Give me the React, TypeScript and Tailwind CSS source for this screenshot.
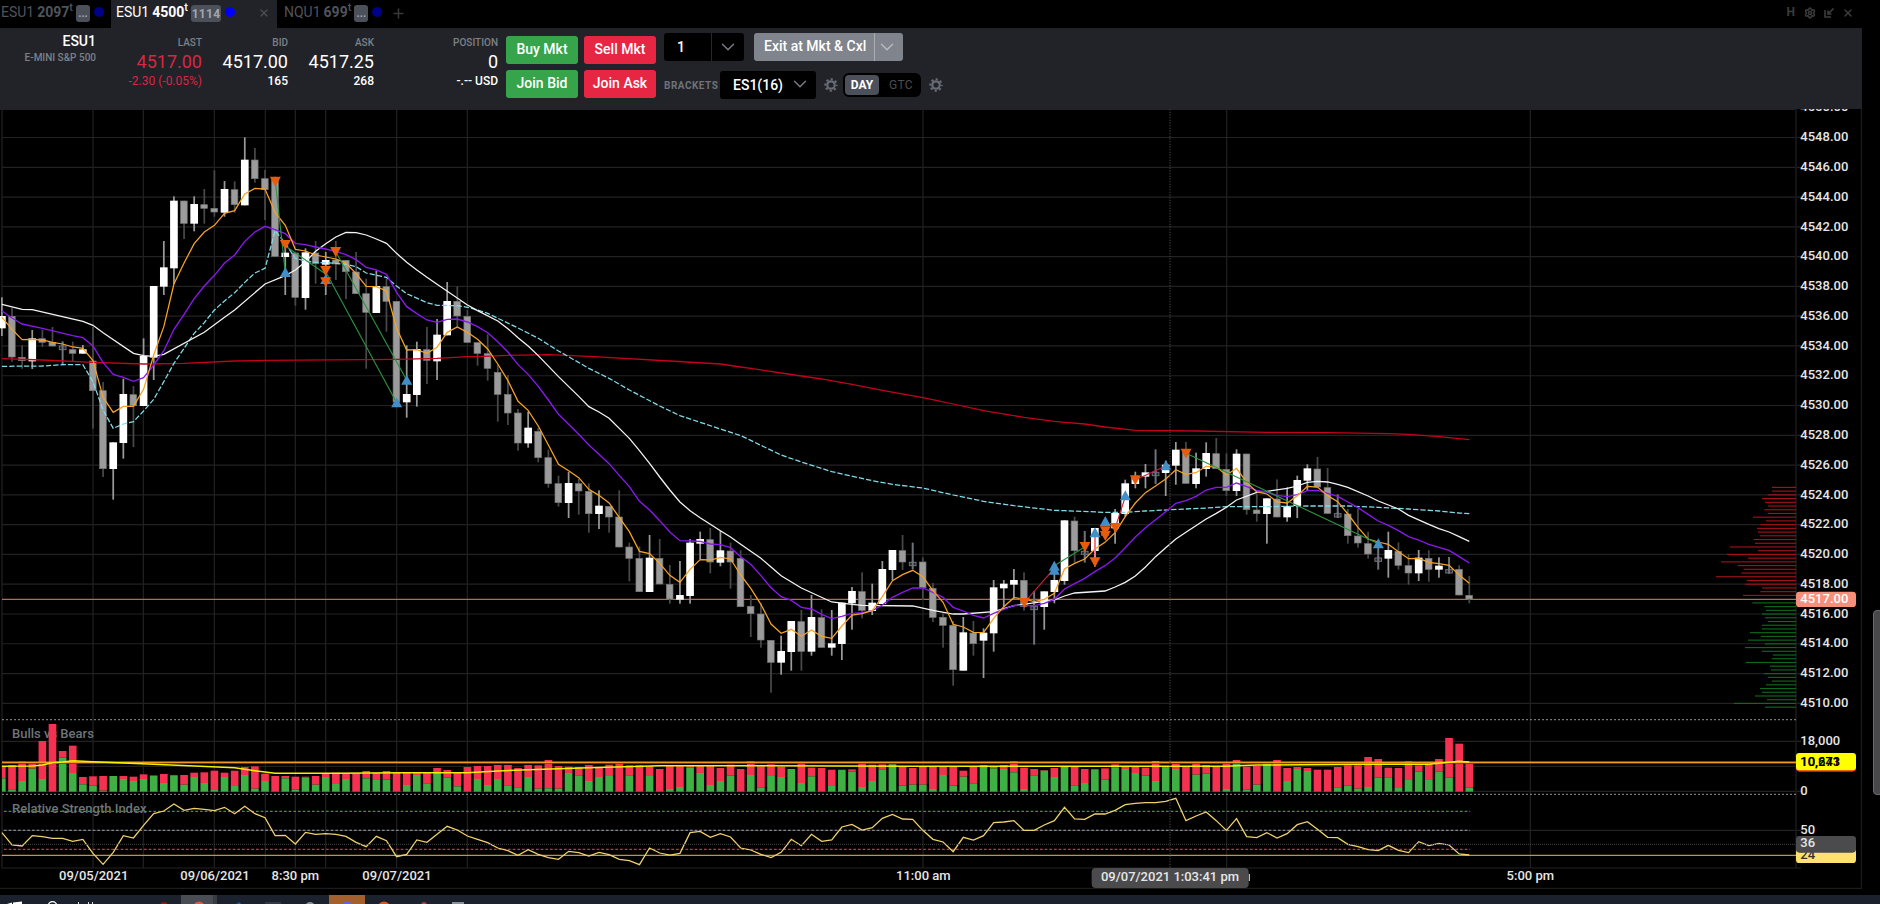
import { ChevronDown, Plus, Settings, X } from "lucide-react";

// All chart coordinates are in thirds of a pixel.
const X0 = 5.7;
const STEP = 30.36;
const AXIS_X = 5389;

const xAt = (i: number) => X0 + STEP * i;

type Segment = { start: number; base: number; rows: number[][] };

// rows: [high, top, bottom, low, kind]  kind: 1 up, 0 down, 2 neutral
const candleSegments: Segment[] = [
  {
    start: 0,
    base: 330,
    rows: [
      [562, 618, 655, 678, 1], [594, 618, 742, 755, 0], [706, 741, 753, 776, 0], [660, 685, 754, 777, 1],
      [660, 685, 698, 711, 0], [651, 696, 709, 709, 0], [694, 707, 718, 766, 2], [695, 718, 731, 754, 0],
      [705, 718, 731, 731, 1], [651, 752, 843, 956, 0], [816, 841, 1077, 1101, 0], [997, 997, 1077, 1169, 1],
      [806, 852, 999, 1046, 1], [828, 853, 888, 1011, 0], [685, 738, 888, 888, 1], [528, 528, 743, 810, 1],
      [393, 472, 530, 555, 1], [259, 272, 475, 522, 1], [272, 272, 341, 387, 0], [259, 282, 341, 364, 1],
      [237, 283, 296, 341, 0], [181, 294, 307, 320, 0], [213, 237, 308, 320, 1], [214, 238, 285, 308, 0],
      [82, 149, 286, 286, 1], [114, 149, 207, 218, 0], [180, 205, 240, 330, 0], [200, 205, 440, 441, 0],
      [400, 428, 441, 555, 1], [428, 428, 563, 587, 0], [415, 427, 564, 599, 1], [393, 428, 462, 521, 0],
      [426, 450, 464, 555, 1], [393, 449, 463, 510, 0], [450, 450, 486, 567, 0], [426, 485, 552, 552, 0],
      [506, 550, 608, 776, 0], [483, 528, 609, 609, 1], [505, 529, 575, 665, 0], [573, 573, 877, 890, 0],
      [706, 852, 877, 923, 1], [695, 717, 855, 890, 1], [651, 718, 752, 822, 0], [627, 674, 754, 810, 1],
      [516, 573, 676, 676, 1], [529, 573, 619, 655, 0], [600, 618, 698, 698, 0],
    ],
  },
  {
    start: 47,
    base: 690,
    rows: [
      [337, 337, 371, 407, 0], [313, 370, 416, 452, 0], [405, 426, 494, 575, 0], [435, 492, 550, 585, 0],
      [537, 548, 640, 662, 0], [545, 593, 640, 653, 1], [594, 603, 684, 697, 0], [659, 682, 762, 773, 0],
      [737, 760, 819, 830, 0], [726, 759, 819, 864, 1], [747, 760, 784, 854, 0], [760, 783, 852, 908, 0],
      [781, 827, 852, 897, 1], [828, 828, 862, 908, 0], [781, 860, 952, 952, 0], [938, 950, 986, 1054, 0],
      [949, 984, 1086, 1086, 0], [915, 983, 1086, 1086, 1], [927, 984, 1063, 1063, 0], [1005, 1062, 1108, 1121, 0],
      [993, 1095, 1109, 1121, 1], [927, 938, 1098, 1121, 1], [905, 927, 941, 987, 1], [894, 928, 997, 1030, 0],
      [903, 961, 998, 1009, 1], [938, 962, 997, 1076, 0], [961, 984, 1131, 1131, 0],
    ],
  },
  {
    start: 74,
    base: 1020,
    rows: [
      [765, 798, 822, 891, 0], [790, 821, 901, 923, 0], [900, 900, 968, 1058, 0], [887, 933, 968, 1004, 1],
      [843, 843, 936, 992, 1], [810, 844, 935, 992, 0], [765, 831, 935, 947, 1], [808, 832, 923, 923, 0],
      [810, 910, 923, 947, 1], [788, 788, 912, 960, 1], [741, 753, 790, 869, 1], [697, 754, 812, 835, 0],
      [731, 788, 813, 825, 1], [663, 687, 792, 792, 1], [630, 630, 690, 720, 1], [585, 631, 667, 690, 0],
      [608, 666, 676, 688, 2], [652, 665, 744, 780, 0], [729, 744, 833, 846, 0], [820, 831, 857, 923, 0],
      [843, 855, 990, 1037, 0], [831, 877, 992, 992, 1], [843, 878, 912, 947, 0], [865, 878, 902, 1014, 1],
      [720, 742, 880, 935, 1], [720, 731, 745, 802, 1], [687, 720, 734, 775, 1], [697, 720, 800, 812, 0],
      [753, 798, 808, 914, 2], [754, 754, 801, 869, 1], [700, 720, 756, 790, 1],
    ],
  },
  {
    start: 105,
    base: 1260,
    rows: [
      [301, 301, 483, 494, 1], [290, 302, 393, 428, 0], [333, 393, 402, 428, 2], [324, 324, 393, 440, 1],
      [330, 335, 345, 355, 2], [267, 279, 325, 371, 1], [179, 190, 282, 290, 1], [155, 170, 192, 205, 1],
      [132, 157, 170, 205, 1], [88, 156, 166, 192, 2], [122, 134, 159, 228, 1], [66, 89, 137, 194, 1],
      [66, 90, 191, 191, 0], [98, 145, 192, 205, 1], [67, 99, 147, 170, 1], [54, 100, 147, 147, 0],
      [100, 147, 213, 228, 0], [88, 101, 213, 228, 1], [101, 101, 270, 284, 0], [220, 269, 282, 305, 0],
      [235, 235, 282, 371, 1], [178, 236, 292, 292, 0], [202, 258, 292, 305, 1], [167, 180, 258, 294, 1],
      [133, 145, 182, 213, 1], [111, 146, 202, 202, 0], [144, 202, 281, 281, 0], [223, 280, 290, 294, 2],
      [267, 281, 348, 371, 0], [267, 347, 370, 383, 0], [335, 370, 403, 416, 0], [360, 413, 423, 449, 2],
      [335, 390, 416, 473, 1], [367, 393, 437, 449, 0], [402, 436, 460, 494, 0], [390, 413, 460, 483, 1],
      [391, 414, 449, 485, 0], [412, 437, 449, 473, 1], [411, 448, 458, 461, 2], [436, 447, 526, 526, 0],
      [468, 525, 538, 550, 0],
    ],
  },
];

// Each part is [base, "index:value ..."]
type Curve = [number, string][];

const fastMa: Curve = [
  [330, "0:622 1:658 2:689 3:688 4:690 5:697 6:702 7:711 8:715 9:752 10:862 11:907 12:889 13:889 14:838 15:735 16:650 17:522 18:459 19:401 20:366 21:346 22:310 23:302 24:252 25:235 26:237 27:308 28:346 29:418 30:423 31:435 32:441 33:447 34:459 35:491 36:529 37:530 38:543 39:655 40:720 41:719 42:730 43:712 44:667 45:651 46:667"],
  [690, "47:328 48:357 49:402 50:452 51:514 52:541 53:588 54:645 55:703 56:722 57:743 58:778 59:796 60:819 61:862 62:905 63:964 64:971 65:1000 66:1036 67:1057 68:1018 69:989 70:990 71:982 72:987 73:1035"],
  [1020, "74:745 75:793 76:852 77:880 78:868 79:889 80:870 81:889 82:895 83:858 84:825 85:821 86:812 87:770 88:722 89:704 90:691 91:710 92:752 93:787 94:853 95:861 96:877 97:878 98:835 99:800 100:773 101:777 102:785 103:778 104:760"],
  [1260, "105:447 106:430 107:417 108:387 109:367 110:338 111:290 112:249 113:218 114:198 115:177 116:149 117:163 118:158 119:139 120:141 121:165 122:145 123:187 124:216 125:222 126:246 127:249 128:227 129:199 130:201 131:227 132:245 133:282 134:322 135:357 136:366 137:373 138:395 139:416 140:415 141:427 142:431 143:436 144:465 145:490"],
];

const midMa: Curve = [
  [330, "0:603 1:624 2:642 4:655 7:677 8:683 9:708 10:758 11:793 12:802 13:814 14:803 15:765 16:722 17:658 18:613 19:566 20:528 21:496 22:459 23:435 24:394 25:366 26:349 27:359 28:371 29:400 30:404 31:411 32:417 33:424 34:434 35:449 36:472 37:480 38:493 39:547 40:590 41:611 42:630 43:637 44:628 45:627 46:636"],
  [690, "47:290 48:308 49:335 50:366 51:404 52:433 53:469 54:510 55:553 56:583 57:613 58:645 59:673 60:701 61:736 62:770 63:814 64:840 65:872 66:906 67:932 68:933 69:934 70:942 71:944 72:953 73:980"],
  [1020, "74:673 75:707 76:743 77:770 78:781 79:802 80:807 81:823 82:836 83:829 84:820 85:818 86:812 87:795 88:772 89:757 90:744 91:744 92:757 93:772 94:802 95:813 96:826 97:834 98:820 99:808 100:796 101:797 102:797 103:790 104:778"],
  [1260, "105:507 106:491 107:475 108:455 109:437 110:414 111:383 112:351 113:323 114:299 115:275 116:250 117:242 118:229 119:210 120:202 121:202 122:189 123:200 124:211 125:216 126:226 127:230 128:224 129:212 130:211 131:220 132:229 133:246 134:263 135:283 136:303 137:316 138:332 139:350 140:360 141:373 142:382 143:391 144:410 145:429"],
];

const slowMa: Curve = [
  [330, "0:583 2:598 3:599 8:634 9:646 10:668 13:730 14:737 15:739 16:733 20:667 22:622 23:600 26:522 28:497 29:480 30:455 31:424 32:401 33:381 34:367 35:368 36:375 37:387 38:400 39:430 40:457 41:480 42:502 43:523 46:585"],
  [690, "47:242 49:273 50:296 51:323 52:348 53:377 55:440 57:499 58:530 59:546 60:565 62:625 63:662 64:700 65:741 66:780 67:816 68:842 69:863 71:902 72:921 73:943"],
  [1020, "74:634 75:655 76:681 77:707 79:744 82:786 84:793 85:796 90:798 92:811 94:822 95:822 98:815 100:797 103:784 104:780"],
  [1260, "105:528 106:519 109:513 110:501 111:487 112:468 113:441 114:410 115:383 116:357 117:337 119:297 120:280 121:262 122:240 124:217 125:214 127:205 128:198 129:187 130:184 131:186 132:193 133:202 135:228 136:243 138:267 139:286 141:313 142:326 143:336 144:350 145:364"],
];

const vwap: Curve = [
  [330, "0:769 4:768 6:764 8:764 9:815 10:900 11:955 12:942 13:935 14:903 15:868 16:815 17:760 18:715 19:670 20:638 21:600 22:573 23:548 24:517 25:489 26:475 27:362 28:400 29:445 30:453 31:457 33:460 34:463 35:470 36:489 38:502 39:528 40:551 42:578 43:586 45:587 46:592"],
  [690, "47:240 48:250 51:294 53:325 55:363 58:415 60:445 62:480 65:528 67:557 69:577 73:617"],
  [1020, "74:301 75:316 77:345 79:366 82:395 86:422 88:433 91:444 94:465 97:484 100:497 104:511"],
  [1260, "105:272 109:277 111:277 113:273 119:264 121:260 125:260 129:258 133:258 136:262 139:267 142:273 144:279 145:281"],
];

const longMa: Curve = [
  [330, "0:746 4:750 9:757 14:762 18:760 23:753 26:751 39:748 43:745 46:740"],
  [690, "47:380 50:376 54:374 58:379 66:393 71:402 73:411"],
  [1020, "74:85 77:99 81:117 84:133 87:151 91:173 94:192 97:212 101:232 104:244"],
  [1260, "105:7 107:12 109:21 112:31 118:33 125:37 131:38 137:41 139:43 142:50 145:59"],
];

const rsi: Curve = [
  [2100, "0:398 1:435 2:438 3:407 4:410 5:415 6:415 7:424 8:418 9:460 10:493 11:457 12:407 13:414 14:376 15:341 16:333 17:312 18:331 19:325 20:328 21:332 22:322 23:341 24:319 25:341 26:353 27:407 28:406 29:432 30:397 31:403 32:401 33:403 34:409 35:427 36:440 37:409 38:422 39:470 40:463 41:420 42:427 43:403 44:379 45:390 46:408 47:418 48:428 49:444 50:452 51:466 52:449 53:463 54:473 55:478 56:454 57:458 58:468 59:457 60:464 61:478 62:482 63:494 64:444 65:459 66:465 67:460 68:398 69:394 70:412 71:401 72:411 73:444 74:450 75:463 76:473 77:457 78:418 79:437 80:403 81:424 82:420 83:381 84:373 85:390 86:383 87:355 88:343 89:357 90:358 91:391 92:418 93:426 94:455 95:412 96:420 97:407 98:368 99:366 100:362 101:391 102:391 103:375 104:362 105:322 106:357 107:358 108:342 109:342 110:331 111:314 112:310 113:308 114:308 115:304 116:295 117:362 118:348 119:336 120:362 121:391 122:356 123:410 124:413 125:398 126:414 127:401 128:374 129:365 130:388 131:412 132:413 133:433 134:440 135:449 136:452 137:436 138:451 139:458 140:425 141:437 142:430 143:435 144:462 145:465"],
];

const volumeMa: Curve = [
  [2100, "0:199 3:198 4:195 5:188 6:186 7:182 9:185 15:193 23:203 25:212 27:220 33:220 40:218 46:218 49:213 52:209 58:203 65:197 75:197 90:199 121:199 122:197 124:195 135:193 141:193 143:187 144:184 145:186"],
];

// [bar top, bull top]
const volume: number[][] = [
  [198, 235], [195, 268], [185, 243], [186, 206], [123, 237], [72, 275], [153, 173], [137, 219], [231, 253], [229, 257],
  [228, 272], [228, 228], [228, 237], [230, 243], [223, 237], [226, 227], [222, 249], [225, 226], [225, 254], [218, 231],
  [217, 249], [212, 270], [218, 231], [212, 258], [201, 225], [199, 266], [221, 243], [228, 275], [228, 235], [230, 269],
  [230, 232], [228, 254], [220, 231], [218, 252], [220, 237], [220, 275], [213, 235], [218, 240], [213, 239], [218, 275],
  [217, 255], [217, 225], [218, 250], [204, 219], [210, 233], [218, 259], [201, 275], [198, 237], [198, 255], [195, 237],
  [195, 256], [204, 262], [195, 231], [196, 266], [180, 265], [198, 266], [200, 219], [201, 226], [195, 243], [202, 231],
  [194, 228], [188, 275], [196, 226], [196, 275], [198, 228], [207, 275], [198, 267], [198, 261], [198, 203], [198, 219],
  [197, 255], [204, 243], [194, 227], [207, 275], [184, 225], [198, 262], [193, 228], [200, 231], [207, 207], [188, 249],
  [203, 229], [204, 275], [209, 258], [209, 210], [208, 215], [187, 261], [194, 243], [193, 208], [192, 193], [200, 257],
  [204, 254], [200, 254], [200, 267], [200, 225], [201, 257], [212, 230], [201, 250], [195, 200], [198, 205], [195, 207],
  [184, 217], [203, 267], [207, 226], [210, 212], [204, 231], [198, 199], [198, 256], [207, 249], [207, 208], [205, 239],
  [193, 203], [198, 207], [201, 219], [203, 227], [183, 243], [200, 204], [192, 207], [200, 275], [186, 224], [195, 221],
  [200, 275], [186, 267], [180, 190], [200, 269], [198, 254], [190, 191], [180, 275], [204, 243], [201, 207], [204, 213],
  [209, 275], [209, 275], [201, 262], [196, 257], [196, 266], [171, 261], [177, 233], [203, 232], [204, 264], [184, 240],
  [196, 215], [186, 240], [177, 215], [114, 233], [131, 275], [190, 263],
];

const askProfile = [72, 72, 85, 102, 93, 84, 95, 84, 129, 90, 107, 117, 114, 108, 127, 123, 198, 114, 207, 144, 225, 175, 157, 164, 240, 148, 152, 102, 107, 159];
const bidProfile = [131, 95, 90, 102, 93, 84, 102, 102, 138, 105, 144, 93, 153, 102, 69, 72, 150, 78, 75, 96, 84, 72, 90, 108, 102, 123, 87, 186, 93];

const priceLabels = Array.from({ length: 21 }, (_, i) => 4550 - i * 2);
const priceY = (price: number) => 412.5 + (4548 - price) * 44.67;

const verticals = [6, 279, 430, 643, 796, 886, 977, 1190, 1402, 2769, 3680, 4591];

const timeLabels = [
  { x: 281, text: "09/05/2021" },
  { x: 645, text: "09/06/2021" },
  { x: 886, text: "8:30 pm" },
  { x: 1191, text: "09/07/2021" },
  { x: 2770, text: "11:00 am" },
  { x: 4591, text: "5:00 pm" },
];

const sells = [[826, 544], [856, 734], [977, 812], [1007, 755], [977, 846], [3073, 1808], [3255, 1640], [3285, 1686], [3316, 1593], [3316, 1607], [3346, 1583], [3406, 1440], [3558, 1360]];
const buys = [[856, 817], [977, 838], [1190, 1208], [1220, 1140], [3163, 1698], [3163, 1710], [3285, 1598], [3316, 1564], [3376, 1487], [3498, 1397], [4135, 1631]];

const trades = [
  { from: [826, 544], to: [856, 817], win: true },
  { from: [856, 738], to: [977, 822], win: true },
  { from: [977, 815], to: [1190, 1208], win: true },
  { from: [1007, 755], to: [1220, 1140], win: true },
  { from: [3073, 1808], to: [3163, 1705], win: false },
  { from: [3163, 1697], to: [3255, 1640], win: true },
  { from: [3346, 1583], to: [3376, 1490], win: false },
  { from: [3406, 1440], to: [3498, 1397], win: false },
  { from: [3558, 1360], to: [4135, 1631], win: true },
];

function toPoints(curve: Curve) {
  return curve
    .flatMap(([base, text]) =>
      text.split(" ").map((pair) => {
        const [i, v] = pair.split(":").map(Number);
        return `${xAt(i).toFixed(1)},${base + v}`;
      })
    )
    .join(" ");
}

function Line({ curve, color, dash, width = 3.8 }: { curve: Curve; color: string; dash?: string; width?: number }) {
  return <polyline points={toPoints(curve)} fill="none" stroke={color} strokeWidth={width} strokeDasharray={dash} />;
}

function Candle({ i, base, row }: { i: number; base: number; row: number[] }) {
  const [high, top, bottom, low, kind] = row;
  const x = xAt(i);
  if (kind === 2) {
    return (
      <g>
        <rect x={x - 3} y={base + high} width={6} height={low - high} fill="#6d727b" />
        <rect x={x - 10} y={base + top + 1} width={20} height={bottom - top} fill="#23262b" stroke="#6d727b" strokeWidth={3} />
        <rect x={x - 3} y={base + top - 4} width={6} height={bottom - top + 6} fill="#6d727b" />
      </g>
    );
  }
  return (
    <g>
      <rect x={x - 2.6} y={base + high} width={5.2} height={low - high} fill={kind ? "#999" : "#484848"} />
      {kind ? (
        <rect x={x - 11.5} y={base + top} width={23} height={bottom - top} fill="#fff" />
      ) : (
        <rect x={x - 10.5} y={base + top + 1} width={20} height={bottom - top - 2} fill="#9b9b9b" stroke="#777" strokeWidth={2} />
      )}
    </g>
  );
}

function Chart() {
  return (
    <svg className="block h-[786px] w-[1880px] shrink-0 font-['Roboto',sans-serif]" viewBox="0 327 5640 2358">
      {/* grid */}
      <g stroke="#222" strokeWidth={3.6}>
        {verticals.map((x) => (
          <line key={x} x1={x} x2={x} y1={327} y2={2604} />
        ))}
        {priceLabels.slice(1).map((p) => (
          <line key={p} x1={6} x2={AXIS_X + 14} y1={priceY(p)} y2={priceY(p)} />
        ))}
        {[2224, 2299, 2374, 2491, 2604].map((y) => (
          <line key={y} x1={6} x2={AXIS_X + 14} y1={y} y2={y} />
        ))}
        <line x1={0} x2={4986 + 400} y1={328} y2={328} />
        <line x1={5388} x2={5388} y1={327} y2={2604} strokeWidth={5} stroke="#191919" />
        <line x1={5584} x2={5584} y1={327} y2={2666} strokeWidth={3} />
        <line x1={0} x2={5585} y1={2665} y2={2665} strokeWidth={3} />
      </g>

      <text x={36} y={2215} fontSize={39} fontWeight={500} fill="#6f747c">Bulls vs Bears</text>

      {/* last price */}
      <line x1={6} x2={AXIS_X} y1={1798} y2={1798} stroke="#b5695c" strokeWidth={3.4} />

      {/* volume profile */}
      {askProfile.map((w, i) => (
        <rect key={i} x={5388 - w} y={1460.5 + i * 11.17} width={w} height={3.4} fill="#a31218" />
      ))}
      {bidProfile.map((w, i) => (
        <rect key={i} x={5388 - w} y={1807 + i * 11.17} width={w} height={3.4} fill="#0c6a1c" />
      ))}

      {candleSegments.map((segment) =>
        segment.rows.map((row, n) => <Candle key={segment.start + n} i={segment.start + n} base={segment.base} row={row} />)
      )}

      {/* bulls vs bears */}
      {volume.map(([top, bull], i) => {
        const left = i === 0 ? 6 : xAt(i) - 11.5;
        const width = i === 0 ? 11 : 23;
        return (
          <g key={i}>
            <rect x={left} y={2100 + top} width={width} height={bull - top} fill="#f53151" />
            <rect x={left} y={2100 + bull} width={width} height={275 - bull} fill="#3eb044" />
          </g>
        );
      })}
      <line x1={6} x2={AXIS_X} y1={2290} y2={2290} stroke="#a52a15" strokeWidth={3} />
      <line x1={6} x2={AXIS_X} y1={2286.5} y2={2286.5} stroke="#f39a1e" strokeWidth={4.5} />
      <Line curve={volumeMa} color="#f2f200" width={4.5} />

      {/* indicators */}
      <Line curve={longMa} color="#c4001c" />
      <Line curve={vwap} color="#7fdbe8" dash="16 6" />
      <Line curve={slowMa} color="#f4f4f4" />
      <Line curve={midMa} color="#8a18f0" width={4} />
      <Line curve={fastMa} color="#f7a224" />

      {/* trades */}
      {trades.map((t, i) => (
        <line key={i} x1={t.from[0]} y1={t.from[1]} x2={t.to[0]} y2={t.to[1]} stroke={t.win ? "#2c9440" : "#c9203c"} strokeWidth={3.4} />
      ))}
      <rect x={3282} y={1605} width={6} height={78} fill="#f2788c" />
      {buys.map(([x, y], i) => (
        <path key={i} d={`M${x} ${y - 16} l16.5 30 h-33 z`} fill="#418fc6" />
      ))}
      {sells.map(([x, y], i) => (
        <path key={i} d={`M${x} ${y + 16} l16.5 -30 h-33 z`} fill="#e65c0c" />
      ))}

      {/* panel separators */}
      <line x1={6} x2={AXIS_X} y1={2159} y2={2159} stroke="#777" strokeWidth={3.4} strokeDasharray="6 6" />
      <line x1={6} x2={AXIS_X} y1={2383} y2={2383} stroke="#777" strokeWidth={3.4} strokeDasharray="6 6" />

      {/* rsi */}
      <text x={36} y={2440} fontSize={39} fontWeight={500} fill="#6f747c">Relative Strength Index</text>
      <line x1={12} x2={4410} y1={2434} y2={2434} stroke="#2f9e33" strokeWidth={3.4} strokeDasharray="8 6" />
      <line x1={12} x2={4410} y1={2491} y2={2491} stroke="#80858e" strokeWidth={3.4} strokeDasharray="8 6" />
      <line x1={12} x2={4410} y1={2548} y2={2548} stroke="#e02646" strokeWidth={3.4} strokeDasharray="8 6" />
      <line x1={6} x2={AXIS_X} y1={2566} y2={2566} stroke="#b39a48" strokeWidth={3.6} />
      <Line curve={rsi} color="#f0d26c" />

      {/* crosshair */}
      <line x1={6} x2={AXIS_X} y1={2533} y2={2533} stroke="#444" strokeWidth={3} strokeDasharray="3 3" />
      <line x1={3510} x2={3510} y1={327} y2={2604} stroke="#3c3c3c" strokeWidth={3.6} strokeDasharray="4 4" />

      {/* price axis */}
      <g fontSize={39} fontWeight={500} fill="#e6e6e6">
        {priceLabels.map((p) => (
          <text key={p} x={5401} y={priceY(p) + 11}>{p.toFixed(2)}</text>
        ))}
        <text x={5401} y={2235}>18,000</text>
        <text x={5401} y={2385}>0</text>
        <text x={5401} y={2501}>50</text>
      </g>
      <rect x={5388} y={1775} width={180} height={46} rx={10} fill="#f78f7b" />
      <text x={5401} y={1808} fontSize={39} fontWeight={500} fill="#fff">4517.00</text>
      <rect x={5388} y={2264} width={180} height={51} rx={10} fill="#e8341c" />
      <rect x={5388} y={2259} width={180} height={52} rx={10} fill="#ff0" />
      <text x={5401} y={2297} fontSize={39} fontWeight={500} fill="#000">10,273</text>
      <text x={5401} y={2297} fontSize={39} fontWeight={500} fill="#000">10,641</text>
      <rect x={5388} y={2540} width={180} height={49} rx={10} fill="#ffe070" />
      <text x={5401} y={2576} fontSize={39} fontWeight={500} fill="#333">24</text>
      <rect x={5388} y={2508} width={180} height={50} rx={10} fill="#4b4b4d" />
      <text x={5401} y={2542} fontSize={39} fontWeight={500} fill="#e6e6e6">36</text>

      {/* time axis */}
      <g fontSize={39} fontWeight={500} fill="#e6e6e6" textAnchor="middle">
        {timeLabels.map((t) => (
          <text key={t.x} x={t.x} y={2641}>{t.text}</text>
        ))}
        <rect x={3746} y={2622} width={3.5} height={21} />
        <rect x={3275} y={2604} width={471} height={60} rx={12} fill="#4b4b4d" />
        <text x={3510} y={2644}>09/07/2021 1:03:41 pm</text>
      </g>
    </svg>
  );
}

function Tab({ symbol, size, badge, active }: { symbol: string; size: string; badge: string; active?: boolean }) {
  return (
    <div className={`flex h-7 items-start pt-[3px] text-sm leading-[18px] ${active ? "text-white" : "text-[#50545c]"}`}>
      <span>{symbol}</span>
      <span className="ml-[3px] font-bold">{size}</span>
      <span className="-mt-1 text-[11px] font-medium">t</span>
      <span
        className={`ml-[3px] mt-[2px] flex h-[17px] items-center justify-center rounded-[3px] bg-[#4b505b] font-bold text-[#a3a6ac] ${active ? "w-[30px] text-xs tracking-wide" : "w-[14px] text-[11px]"}`}
      >
        {badge}
      </span>
      <span className={`ml-1 mt-1 size-[10px] rounded-full ${active ? "bg-[#0000ff]" : "bg-[#000088]"}`} />
    </div>
  );
}

function Quote({ label, value, sub, className = "", tone = "text-white" }: { label: string; value: string; sub: string; className?: string; tone?: string }) {
  return (
    <div className={`flex shrink-0 flex-col items-end pt-2 ${className}`}>
      <span className="text-[10px] leading-[13px] font-medium text-[#7c8189]">{label}</span>
      <span className={`mt-[3px] text-lg leading-[20px] ${tone}`}>{value}</span>
      <span className={`mt-[2px] text-xs leading-[14px] ${tone} ${tone === "text-white" ? "font-medium" : ""}`}>{sub}</span>
    </div>
  );
}

function TradeButton({ label, buy }: { label: string; buy?: boolean }) {
  return (
    <button className={`h-7 w-[72px] rounded-[3px] pb-[2px] text-sm font-medium text-white ${buy ? "bg-[#36a44b]" : "bg-[#e72644]"}`}>
      {label}
    </button>
  );
}

function Gear({ className }: { className: string }) {
  return (
    <svg className={className} viewBox="0 0 14 14" fill="none" stroke="currentColor">
      <circle cx="7" cy="7" r="3.7" strokeWidth="2.2" />
      <circle cx="7" cy="7" r="5.7" strokeWidth="2" strokeDasharray="2.2 2.28" strokeDashoffset="1.1" />
    </svg>
  );
}

function Header() {
  return (
    <header className="flex h-[81px] w-[1862px] shrink-0 bg-[#222328]">
      <div className="flex w-24 flex-col items-end pt-[5px]">
        <span className="text-sm leading-[17px] font-medium text-white">ESU1</span>
        <span className="mt-[2px] text-[10px] leading-[12px] font-medium text-[#7c8189]">E-MINI S&amp;P 500</span>
      </div>
      <Quote label="LAST" value="4517.00" sub="-2.30 (-0.05%)" className="w-[106px]" tone="text-[#d92644]" />
      <Quote label="BID" value="4517.00" sub="165" className="w-[86px]" />
      <Quote label="ASK" value="4517.25" sub="268" className="w-[86px]" />
      <Quote label="POSITION" value="0" sub="-.-- USD" className="w-[124px]" />

      <div className="ml-2 grid grid-cols-2 content-start gap-x-[6px] gap-y-[6px] pt-2">
        <TradeButton label="Buy Mkt" buy />
        <TradeButton label="Sell Mkt" />
        <TradeButton label="Join Bid" buy />
        <TradeButton label="Join Ask" />
      </div>

      <div className="ml-2 flex flex-col pt-[5px]">
        <div className="flex">
          <div className="flex h-7 w-20 rounded-[3px] bg-black text-sm text-white">
            <span className="w-[48px] border-r border-[#26272c] pl-[13px] leading-7 font-medium">1</span>
            <span className="flex flex-1 items-center justify-center text-[#7b7e85]">
              <ChevronDown size={22} strokeWidth={1.5} />
            </span>
          </div>
          <div className="ml-[10px] flex h-7 w-[149px] rounded-[3px] bg-[#80848c] text-sm font-medium text-white">
            <span className="w-[121px] border-r border-[#a9acb2] pl-[10px] leading-[26px] whitespace-nowrap">Exit at Mkt &amp; Cxl</span>
            <span className="flex flex-1 items-center justify-center pr-1 text-[#b9bbc0]">
              <ChevronDown size={22} strokeWidth={1.5} />
            </span>
          </div>
        </div>
        <div className="mt-[10px] flex h-7 items-center">
          <span className="w-14 text-[10px] font-bold tracking-[0.5px] text-[#6e727a]">BRACKETS</span>
          <div className="flex h-7 w-24 items-center rounded-[3px] bg-black pl-[13px] text-sm font-medium text-white">
            ES1(16)
            <ChevronDown className="-mt-[2px] ml-[6px] text-[#7b7e85]" size={22} strokeWidth={1.5} />
          </div>
          <Gear className="ml-2 size-[14px] text-[#676c75]" />
          <div className="ml-[5px] flex h-6 w-[78px] items-center rounded-md bg-black pl-[2px] text-xs">
            <span className="h-5 w-[34px] rounded-[4px] bg-[#4b505b] text-center leading-5 font-bold text-white">DAY</span>
            <span className="ml-[10px] tracking-wide text-[#4a4c51]">GTC</span>
          </div>
          <Gear className="ml-2 size-[14px] text-[#676c75]" />
        </div>
      </div>
    </header>
  );
}

function Taskbar() {
  return (
    <svg className="block h-[9px] w-[1880px] shrink-0 bg-[#1b222d]" viewBox="0 0 1880 9">
      <path d="M7 9 l5 -1.5 V9 z M13 7.5 L22 6.5 V9 H13 z" fill="#fff" />
      <circle cx="52.5" cy="11" r="4.3" fill="none" stroke="#fff" strokeWidth="1.3" />
      <path d="M78.5 7 V9 M88.5 7 V9 M92.5 7 V9" stroke="#ddd" />
      <circle cx="164" cy="11" r="4" fill="#8a1f10" />
      <rect x="181" width="32" height="9" fill="#494c52" />
      <rect x="213" width="4" height="9" fill="#383b40" />
      <circle cx="199" cy="12" r="5.5" fill="#dd5a4b" />
      <path d="M236 9 h5 l-1.5 -2 z" fill="#24549b" />
      <rect x="265" y="7" width="16" height="2" fill="#303944" />
      <circle cx="310" cy="12" r="5" fill="#8b9097" />
      <rect x="329" width="36" height="9" fill="#a3602c" />
      <circle cx="347" cy="13" r="6.5" fill="#5865f2" />
      <circle cx="384" cy="13" r="6.5" fill="#df5321" />
      <circle cx="424" cy="10" r="3" fill="#a44" />
      <rect x="452" y="7" width="12" height="2" fill="#8b9097" />
    </svg>
  );
}

function App() {
  return (
    <div className="relative flex h-[904px] w-[1880px] flex-col overflow-hidden bg-black font-['Roboto',sans-serif]">
      <div className="flex h-7 shrink-0">
        <div className="w-[111px] pl-px">
          <Tab symbol="ESU1" size="2097" badge="..." />
        </div>
        <div className="flex w-[166px] justify-between bg-[#222328] pr-[7px] pl-[5px]">
          <Tab symbol="ESU1" size="4500" badge="1114" active />
          <X className="mt-[7px] text-[#4c4e53]" size={12} strokeWidth={2.5} />
        </div>
        <div className="flex pl-[7px]">
          <Tab symbol="NQU1" size="699" badge="..." />
          <Plus className="mt-[6px] ml-[9px] text-[#37383b]" size={15} strokeWidth={2.5} />
        </div>
        <div className="ml-auto flex items-start gap-2 pt-[7px] pr-[26px] text-[#3c3c3e]">
          <span className="-mt-px text-xs leading-3 font-bold">H</span>
          <Settings size={12} strokeWidth={3} className="ml-px" />
          <svg className="mt-px size-[10px]" viewBox="0 0 10 10" fill="none" stroke="currentColor" strokeWidth="1.6">
            <path d="M1 2 V9 H7 M9.5 0.5 L4 6 M4 2.5 V6 H7.5" />
          </svg>
          <X size={12} strokeWidth={3} />
        </div>
      </div>
      <Header />
      <Chart />
      <Taskbar />
      {/* page scrollbar thumb */}
      <div className="absolute top-[610px] left-[1873px] h-[185px] w-3 rounded-sm border border-[#6b6b6d] bg-[#48484a]" />
    </div>
  );
}

export default App;
